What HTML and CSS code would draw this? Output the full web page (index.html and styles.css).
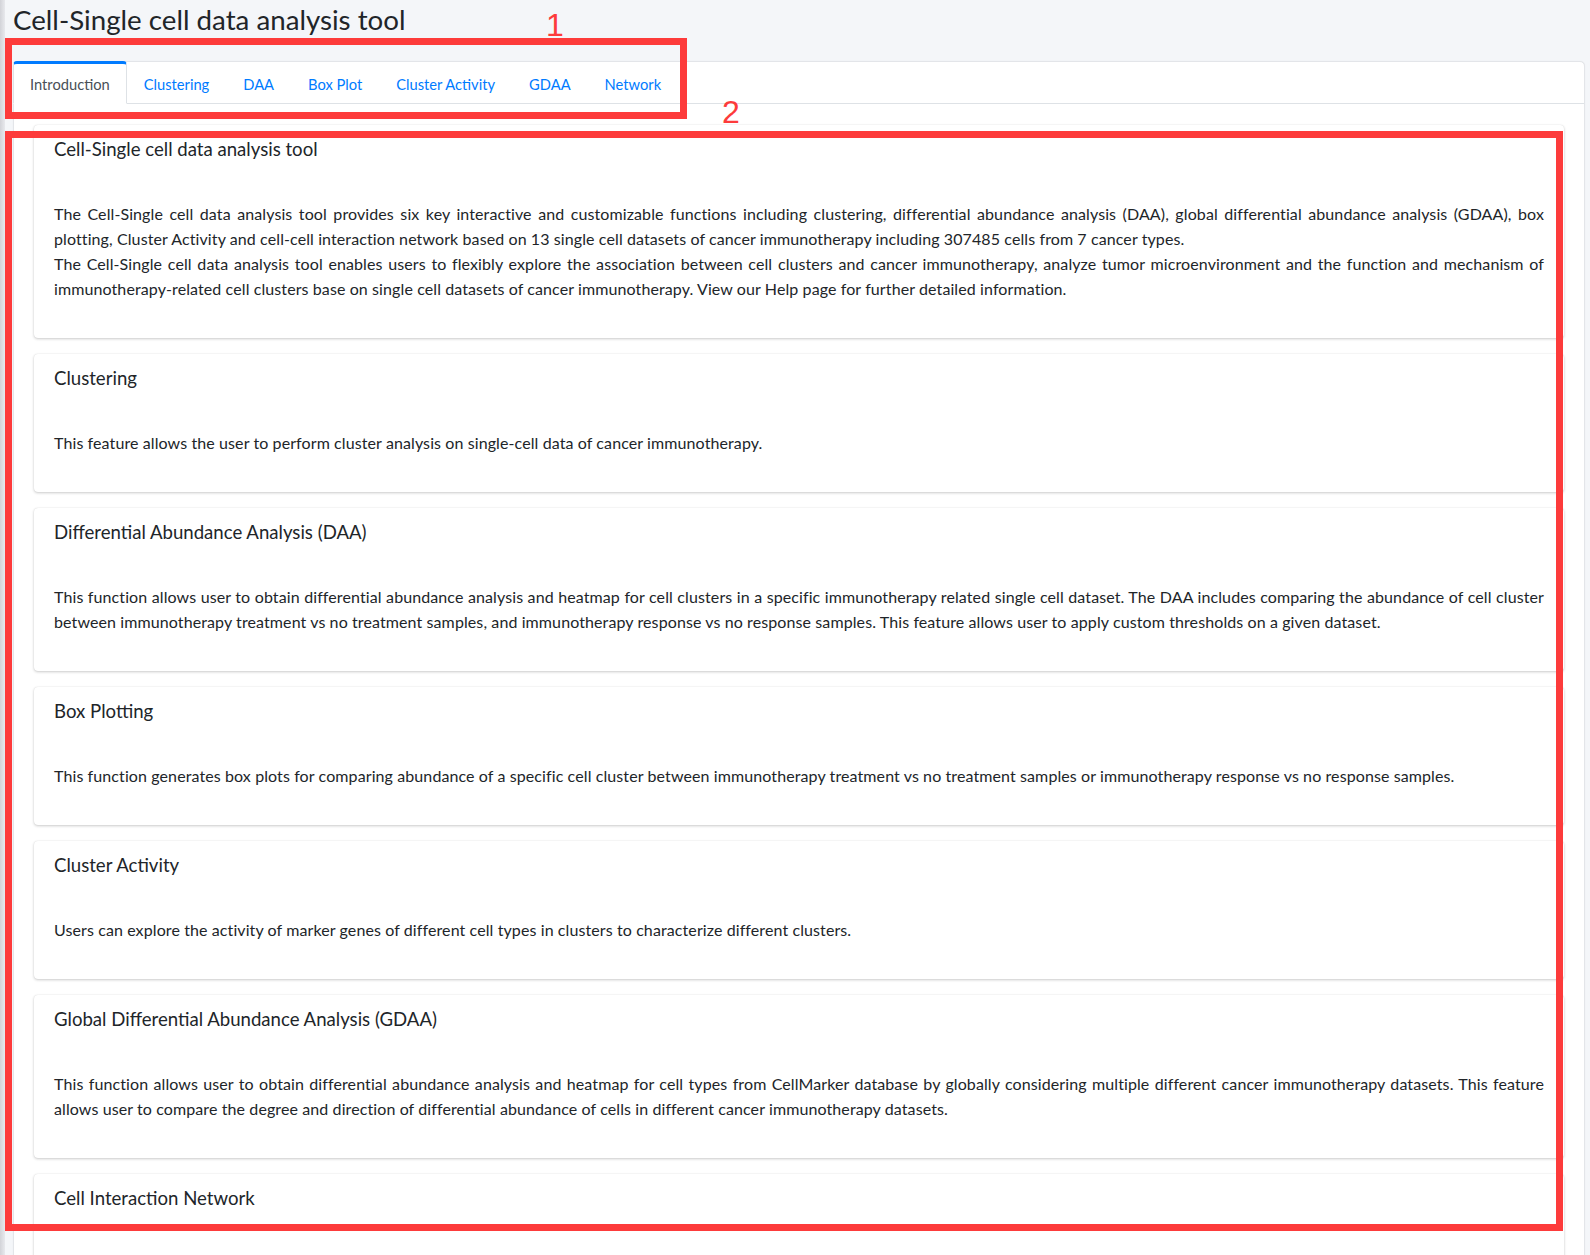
FILE: index.html
```html
<!DOCTYPE html>
<html lang="en">
<head>
    <meta charset="UTF-8">
    <meta name="viewport" content="width=device-width, initial-scale=1.0">
    <title>Cell-Single cell data analysis tool</title>
    <link rel="stylesheet" href="styles.css">
</head>
<body>

    <div class="wrapper">
        <h1 class="page-title">Cell-Single cell data analysis tool</h1>

        <!-- Tabset -->
        <div class="tab-card">
            <ul class="nav-tabs">
                <li class="nav-link active">Introduction</li>
                <li class="nav-link">Clustering</li>
                <li class="nav-link">DAA</li>
                <li class="nav-link">Box Plot</li>
                <li class="nav-link">Cluster Activity</li>
                <li class="nav-link">GDAA</li>
                <li class="nav-link">Network</li>
            </ul>

            <div class="tab-body">
                <div class="card">
                    <div class="card-header"><h3>Cell-Single cell data analysis tool</h3></div>
                    <div class="card-body">
                        <p>The Cell-Single cell data analysis tool provides six key interactive and customizable functions including clustering, differential abundance analysis (DAA), global differential abundance analysis (GDAA), box plotting, Cluster Activity and cell-cell interaction network based on 13 single cell datasets of cancer immunotherapy including 307485 cells from 7 cancer types.<br>The Cell-Single cell data analysis tool enables users to flexibly explore the association between cell clusters and cancer immunotherapy, analyze tumor microenvironment and the function and mechanism of immunotherapy-related cell clusters base on single cell datasets of cancer immunotherapy. View our Help page for further detailed information.</p>
                    </div>
                </div>

                <div class="card">
                    <div class="card-header"><h3>Clustering</h3></div>
                    <div class="card-body">
                        <p>This feature allows the user to perform cluster analysis on single-cell data of cancer immunotherapy.</p>
                    </div>
                </div>

                <div class="card">
                    <div class="card-header"><h3>Differential Abundance Analysis (DAA)</h3></div>
                    <div class="card-body">
                        <p>This function allows user to obtain differential abundance analysis and heatmap for cell clusters in a specific immunotherapy related single cell dataset. The DAA includes comparing the abundance of cell cluster between immunotherapy treatment vs no treatment samples, and immunotherapy response vs no response samples. This feature allows user to apply custom thresholds on a given dataset.</p>
                    </div>
                </div>

                <div class="card">
                    <div class="card-header"><h3>Box Plotting</h3></div>
                    <div class="card-body">
                        <p>This function generates box plots for comparing abundance of a specific cell cluster between immunotherapy treatment vs no treatment samples or immunotherapy response vs no response samples.</p>
                    </div>
                </div>

                <div class="card">
                    <div class="card-header"><h3>Cluster Activity</h3></div>
                    <div class="card-body">
                        <p>Users can explore the activity of marker genes of different cell types in clusters to characterize different clusters.</p>
                    </div>
                </div>

                <div class="card">
                    <div class="card-header"><h3>Global Differential Abundance Analysis (GDAA)</h3></div>
                    <div class="card-body">
                        <p>This function allows user to obtain differential abundance analysis and heatmap for cell types from CellMarker database by globally considering multiple different cancer immunotherapy datasets. This feature allows user to compare the degree and direction of differential abundance of cells in different cancer immunotherapy datasets.</p>
                    </div>
                </div>

                <div class="card">
                    <div class="card-header"><h3>Cell Interaction Network</h3></div>
                    <div class="card-body">
                        <p>This function allows user to explore the cell-cell interaction network among different cell clusters in a specific immunotherapy related single cell dataset.</p>
                    </div>
                </div>
            </div>
        </div>
    </div>

    <!-- Annotation marks drawn over the screenshot -->
    <div class="mark mark-tabs"></div>
    <div class="mark mark-content"></div>
    <span class="mark-num num-1">1</span>
    <span class="mark-num num-2">2</span>

</body>
</html>
```

FILE: styles.css
```css
html, body {
    margin: 0;
    height: 100%;
    overflow: hidden;
}

body {
    font-family: Lato, "Noto Sans", sans-serif;
    color: #212529;
    background: linear-gradient(to right, #d2d3d8 0, #e8e9ed 5px, #f4f6f9 5px);
    position: relative;
}

.wrapper {
    padding: 0 5px 0 13px;
}

.page-title {
    font-size: 27.7px;
    font-weight: 400;
    line-height: 35px;
    margin: 2px 0 24px;
}

/* Tabset card */
.tab-card {
    background: #fff;
    border: 1px solid #e3e5e9;
    border-radius: 5px;
    box-shadow: 0 0 1px rgba(0, 0, 0, 0.08);
}

.nav-tabs {
    display: flex;
    list-style: none;
    margin: 0;
    padding: 0;
    border-bottom: 1px solid #dee2e6;
}

.nav-link {
    font-size: 14.7px;
    line-height: 24px;
    padding: 8px 16px 7px;
    color: #007bff;
    border: 1px solid transparent;
    border-top: 3px solid transparent;
    margin: -1px 0 -1px 0;
}

.nav-link.active {
    color: #495057;
    background: #fff;
    border-color: #dee2e6 #dee2e6 #fff;
    border-top-color: #007bff;
    border-radius: 4px 4px 0 0;
    margin-left: -1px;
}

.tab-body {
    padding: 21px 20px 20px;
}

/* Feature cards */
.card {
    background: #fff;
    border-radius: 4px;
    box-shadow: 0 0 1px rgba(0, 0, 0, 0.125), 0 1px 3px rgba(0, 0, 0, 0.2);
    margin-bottom: 16px;
}

.card-header {
    padding: 9px 20px 16px;
}

.card-header h3 {
    margin: 0;
    font-size: 18.6px;
    font-weight: 400;
    line-height: 30px;
}

.card-body {
    padding: 21px 20px 21px;
}

.card-body p {
    margin: 0 0 16px;
    font-size: 16px;
    line-height: 25px;
    letter-spacing: 0.1px;
    text-align: justify;
}

/* Red annotation boxes */
.mark {
    position: absolute;
    box-sizing: border-box;
    border: 7px solid #fd3b3b;
}

.mark-tabs {
    left: 5px;
    top: 38px;
    width: 682px;
    height: 81px;
}

.mark-content {
    left: 5px;
    top: 131px;
    width: 1558px;
    height: 1100px;
}

.mark-num {
    position: absolute;
    font-family: "Liberation Sans", Arial, sans-serif;
    font-size: 32px;
    line-height: 1;
    color: #fd3b3b;
}

.num-1 {
    left: 546px;
    top: 9px;
}

.num-2 {
    left: 722px;
    top: 96px;
}
```
